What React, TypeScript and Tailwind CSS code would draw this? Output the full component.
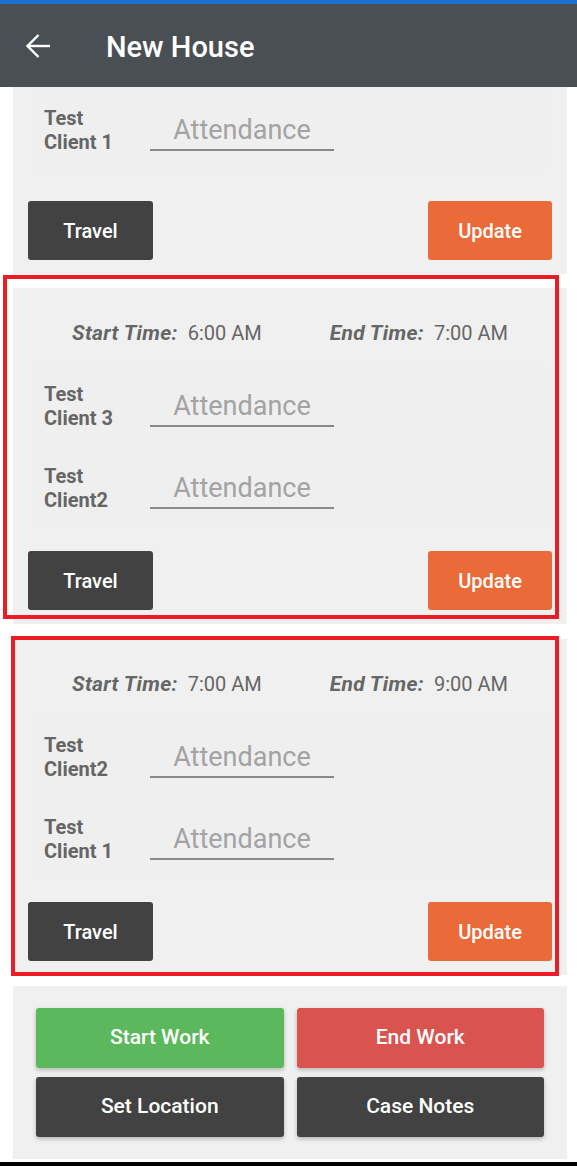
import type { ReactNode } from "react";

type Slot = {
  start?: string;
  end?: string;
  clients: string[];
};

const slots: Slot[] = [
  { clients: ["Test Client 1"] },
  { start: "6:00 AM", end: "7:00 AM", clients: ["Test Client 3", "Test Client2"] },
  { start: "7:00 AM", end: "9:00 AM", clients: ["Test Client2", "Test Client 1"] },
];

function BackArrow() {
  return (
    <svg width="26" height="26" viewBox="0 0 26 26" fill="none" stroke="white" strokeWidth="2.4">
      <path d="M25 13H2.5" />
      <path d="M13.5 2 2.5 13l11 11" />
    </svg>
  );
}

function ClientRow({ name }: { name: string }) {
  return (
    <div className="flex h-[82px] items-center pl-[31px]">
      <div className="mr-[20px] w-[86px] text-[20px] font-bold leading-[24px] text-[#666666]">
        {name}
      </div>
      <div className="mt-[2px] flex h-[40px] w-[184px] items-center justify-center border-b-2 border-[#8a8a8a] text-[27px] leading-none text-[#a3a3a3]">
        Attendance
      </div>
    </div>
  );
}

function Btn({ color, children, className }: { color: string; children: ReactNode; className?: string }) {
  return (
    <button
      type="button"
      className={`flex items-center justify-center rounded-[3px] text-[20px] font-medium text-white ${color} ${className ?? ""}`}
    >
      {children}
    </button>
  );
}

function SlotCard({ slot, first }: { slot: Slot; first?: boolean }) {
  return (
    <div className={`mx-[13px] w-[554px] bg-[#f0f0f0] pb-[14px] ${first ? "pt-[2px]" : "pt-[33px]"}`}>
      {slot.start ? (
        <div className="mb-[20px] flex h-[24px] items-center justify-center gap-[68px] text-[20px] leading-[24px] text-[#666666]">
          <div>
            <span className="text-[21px] font-bold italic tracking-[0.3px]">Start Time:</span>
            <span className="ml-[10px]">{slot.start}</span>
          </div>
          <div>
            <span className="text-[21px] font-bold italic tracking-[0.3px]">End Time:</span>
            <span className="ml-[10px]">{slot.end}</span>
          </div>
        </div>
      ) : null}
      <div className="mx-[20px] bg-[#efefef]">
        {slot.clients.map((c) => (
          <div key={c} className="-ml-[20px]">
            <ClientRow name={c} />
          </div>
        ))}
      </div>
      <div className={`flex justify-between px-[15px] ${first ? "mt-[30px]" : "mt-[22px]"}`}>
        <Btn color="bg-[#424242]" className="h-[59px] w-[125px]">Travel</Btn>
        <Btn color="bg-[#ea6b39]" className="h-[59px] w-[124px]">Update</Btn>
      </div>
    </div>
  );
}

export default function App() {
  return (
    <div className="relative min-h-[1166px] w-[577px] bg-white font-[Roboto,sans-serif]">
      <div className="h-[4px] bg-[#1a73d0]" />
      <header className="flex h-[83px] items-center bg-[#4a4f55] pl-[25px]">
        <BackArrow />
        <h1 className="ml-[55px] mt-[4px] text-[29px] font-medium text-white">New House</h1>
      </header>

      <SlotCard slot={slots[0]} first />
      <div className="mt-[14px]">
        <SlotCard slot={slots[1]} />
      </div>
      <div className="mt-[15px]">
        <SlotCard slot={slots[2]} />
      </div>

      <div className="mx-[13px] mt-[11px] grid w-[554px] grid-cols-2 gap-x-[13px] gap-y-[9px] bg-[#f0f0f0] px-[23px] py-[22px]">
        <Btn color="bg-[#5cb85c]" className="h-[60px] text-[21px] shadow-[0_2px_4px_rgba(0,0,0,0.25)]">Start Work</Btn>
        <Btn color="bg-[#d9534f]" className="h-[60px] text-[21px] shadow-[0_2px_4px_rgba(0,0,0,0.25)]">End Work</Btn>
        <Btn color="bg-[#424242]" className="h-[60px] text-[21px] shadow-[0_2px_4px_rgba(0,0,0,0.25)]">Set Location</Btn>
        <Btn color="bg-[#424242]" className="h-[60px] text-[21px] shadow-[0_2px_4px_rgba(0,0,0,0.25)]">Case Notes</Btn>
      </div>

      <div className="absolute bottom-0 left-0 h-[4px] w-full bg-black" />

      {/* red annotation outlines */}
      <div className="pointer-events-none absolute left-[3px] top-[275px] h-[344px] w-[556px] border-4 border-[#ed1c24]" />
      <div className="pointer-events-none absolute left-[11px] top-[636px] h-[340px] w-[548px] border-4 border-[#ed1c24]" />
    </div>
  );
}
